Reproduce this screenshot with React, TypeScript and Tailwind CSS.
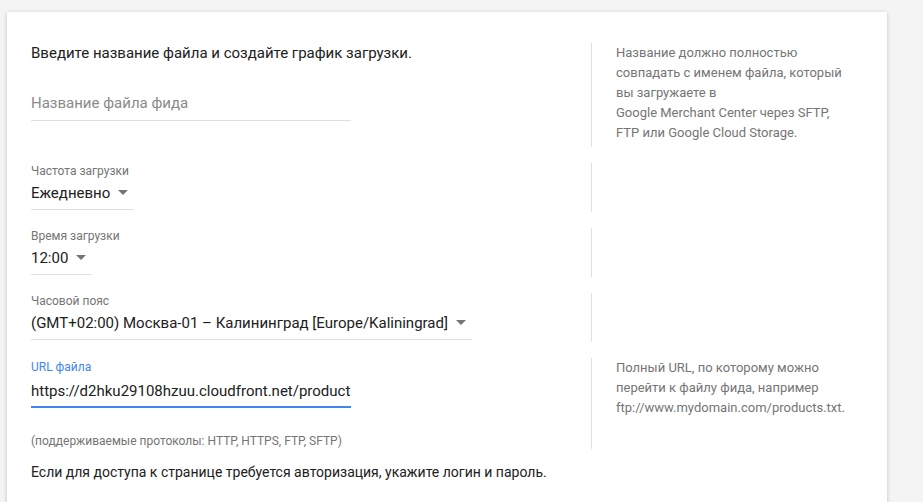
const font = { fontFamily: "Roboto, 'Noto Sans', sans-serif" };

function Arrow() {
  return (
    <svg width="10" height="5" viewBox="0 0 10 5" className="ml-2 shrink-0">
      <path d="M0 0h10L5 5z" fill="#757575" />
    </svg>
  );
}

function Select({ label, value }: { label: string; value: string }) {
  return (
    <div>
      <div className="text-[12px] leading-4 text-[#757575]">{label}</div>
      <div className="mt-[2px] inline-flex items-center h-[29px] pb-[5px] border-b border-[#e0e0e0] pr-[6px] text-[15px] leading-6 text-[#212121]">
        <span>{value}</span>
        <Arrow />
      </div>
    </div>
  );
}

function Hint({ children, h }: { children?: React.ReactNode; h: string }) {
  return (
    <div className={`border-l border-[#e0e0e0] pl-6 text-[13px] leading-5 text-[#757575] ${h}`}>
      {children}
    </div>
  );
}

export default function App() {
  return (
    <div className="min-h-screen bg-[#f4f4f4] overflow-hidden pt-3 pl-[7px]" style={font}>
      <div className="w-[880px] bg-white shadow-[0_1px_4px_rgba(0,0,0,0.22)] pt-[31px] pl-6 pb-10">
        {/* file name */}
        <div className="flex h-[104px]">
          <div className="w-[560px]">
            <div className="text-[15px] leading-5 text-[#212121]">
              Введите название файла и создайте график загрузки.
            </div>
            <div className="mt-[28px] w-[320px] h-[30px] pb-[5px] border-b border-[#e0e0e0] text-[15px] leading-6 text-[#8a8a8a]">
              Название файла фида
            </div>
          </div>
          <Hint h="h-[104px]">
            Название должно полностью
            <br />
            совпадать с именем файла, который
            <br />
            вы загружаете в
            <br />
            Google Merchant Center через SFTP,
            <br />
            FTP или Google Cloud Storage.
          </Hint>
        </div>

        <div className="mt-4 flex h-[49px]">
          <div className="w-[560px]">
            <Select label="Частота загрузки" value="Ежедневно" />
          </div>
          <Hint h="h-[49px]" />
        </div>

        <div className="mt-4 flex h-[49px]">
          <div className="w-[560px]">
            <Select label="Время загрузки" value="12:00" />
          </div>
          <Hint h="h-[49px]" />
        </div>

        <div className="mt-4 flex h-[49px]">
          <div className="w-[560px]">
            <Select
              label="Часовой пояс"
              value="(GMT+02:00) Москва-01 – Калининград [Europe/Kaliningrad]"
            />
          </div>
          <Hint h="h-[49px]" />
        </div>

        {/* url */}
        <div className="mt-4 flex h-[91px]">
          <div className="w-[560px] pt-px">
            <div className="text-[12px] leading-4 text-[#4285f4]">URL файла</div>
            <div className="mt-1 w-[320px] h-[29px] pb-[3px] border-b-2 border-[#4285f4] text-[15px] leading-6 text-[#212121] overflow-hidden whitespace-nowrap">
              https://d2hku29108hzuu.cloudfront.net/products.txt
            </div>
            <div className="mt-[25px] text-[12px] leading-4 text-[#757575]">
              (поддерживаемые протоколы: HTTP, HTTPS, FTP, SFTP)
            </div>
          </div>
          <Hint h="h-[91px]">
            Полный URL, по которому можно
            <br />
            перейти к файлу фида, например
            <br />
            ftp://www.mydomain.com/products.txt.
          </Hint>
        </div>

        <div className="mt-[13px] text-[14px] leading-5 text-[#212121]">
          Если для доступа к странице требуется авторизация, укажите логин и пароль.
        </div>
      </div>
    </div>
  );
}
